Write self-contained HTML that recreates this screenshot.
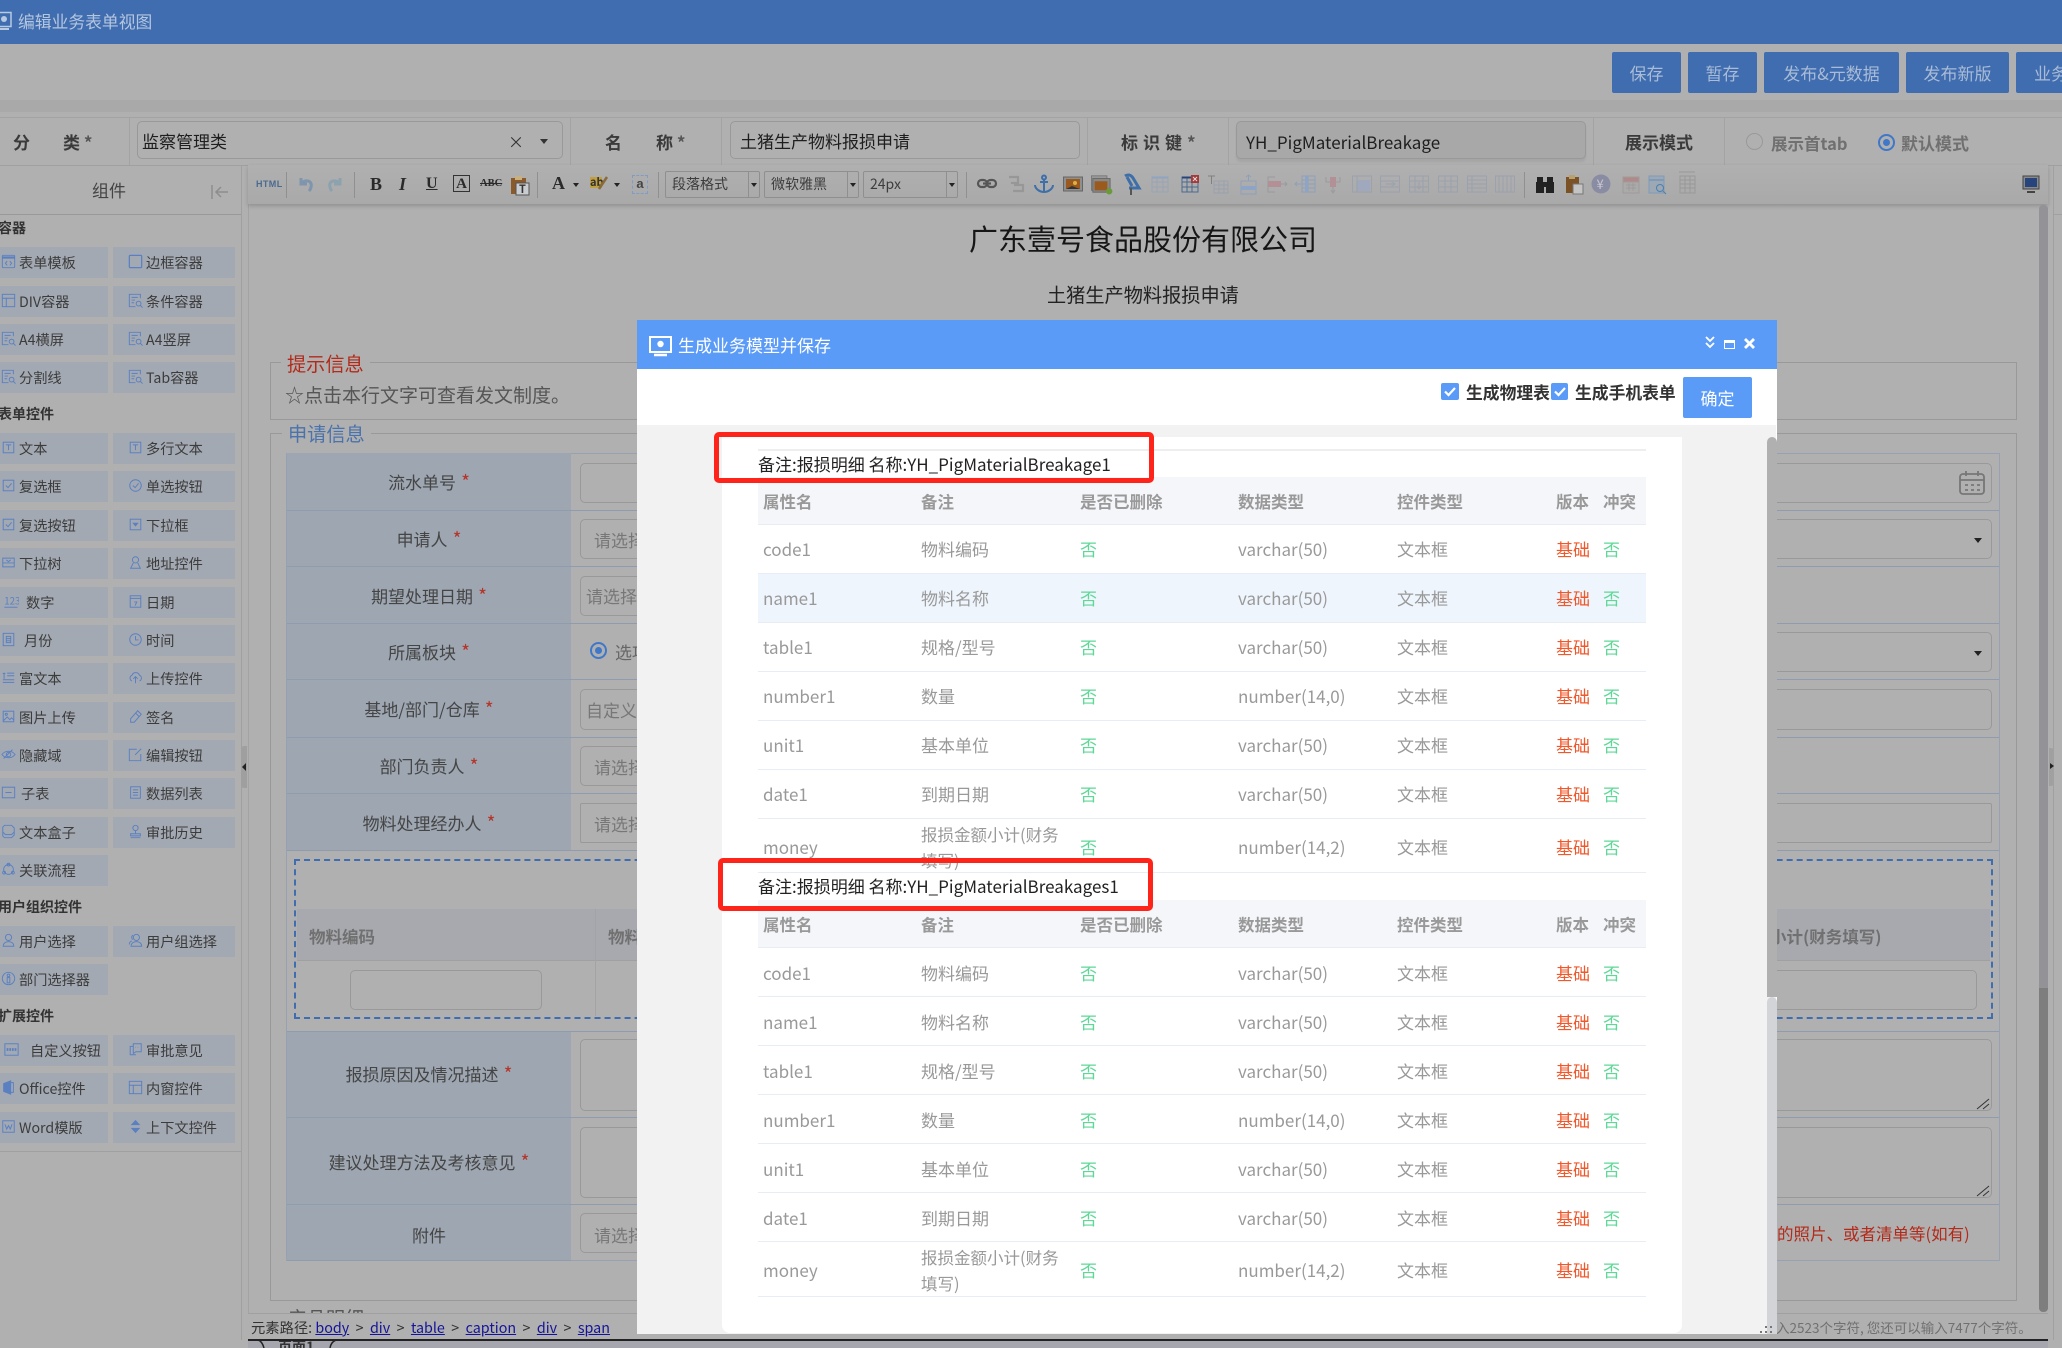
<!DOCTYPE html>
<html lang="zh"><head><meta charset="utf-8"><title>编辑业务表单视图</title>
<style>
*{box-sizing:border-box}
html{margin:0;padding:0;width:2062px;height:1348px;overflow:hidden}
body{margin:0;padding:0;position:relative;width:2062px;height:1348px;overflow:hidden;background:#b0b0b0;font-family:"Noto Sans CJK SC","Liberation Sans",sans-serif;font-size:17px;color:#333}
.a{position:absolute}
.t{position:absolute;white-space:nowrap;height:24px;line-height:24px}
.btn{position:absolute;top:52px;height:41px;background:#3f6db0;border-radius:2px;color:#a9bbd6;text-align:center;line-height:41px;font-size:17px;overflow:hidden;white-space:nowrap}
.inp{position:absolute;border:1px solid #999;border-radius:5px}
.b{position:absolute;height:31px;background:#a3a9b2;font-size:14.2px;color:#3c3c3c;line-height:32px;white-space:nowrap}
.b span{position:absolute;top:0}
.l{left:0;width:108px}.l span{left:19px}.l .ic{left:1px}
.r{left:113px;width:122px}.r span{left:33px}.r .ic{left:15px}
.ic{position:absolute;top:7px;width:15px;height:15px;fill:none;stroke:#5a80c2;stroke-width:1.1}
.sec{position:absolute;left:-2px;font-size:14px;font-weight:700;color:#333;white-space:nowrap;height:20px;line-height:20px}
.tb{position:absolute;top:174px;width:20px;height:20px;overflow:visible}
.sp{position:absolute;top:172px;width:1px;height:26px;background:#909090}
.sel{position:absolute;top:171px;height:27px;border:1px solid #8f8f8f;border-radius:2px;font-size:14px;line-height:25px;color:#3c3c3c;padding-left:6px;white-space:nowrap}
.sel i{position:absolute;right:10px;top:0;bottom:0;border-left:1px solid #8f8f8f}
.sel b{position:absolute;right:2px;top:11px;border:3.5px solid transparent;border-top:4px solid #222;border-bottom:0}
.lab{position:absolute;left:287px;width:284px;background:#9da6b1;border-bottom:1px solid #8f9cae;color:#454545;font-size:17px;text-align:center;white-space:nowrap}
.lab em{font-style:normal;color:#b5352a;margin-left:5px;font-size:19px;line-height:1}
.cell{position:absolute;left:571px;width:1428px;border-bottom:1px solid #8f9cae}
.row{position:absolute;left:758px;width:888px;border-bottom:1.5px solid #e8ecf4;font-size:17px;color:#999}
.row span{position:absolute;top:0;white-space:nowrap}
.c1{left:5px}.c2{left:163px}.c3{left:322px}.c4{left:480px}.c5{left:639px}.c6{left:798px}.c7{left:845px}
.g{color:#5fd897}.o{color:#f0582c}
.h{background:#f5f6fa;font-weight:700;font-size:16.5px;color:#999}
.cap{position:absolute;left:758px;white-space:nowrap;font-size:17px;color:#222;height:26px;line-height:26px}
.red{position:absolute;border:5px solid #ff2419;border-radius:5px}
</style></head><body>
<svg width="0" height="0" style="position:absolute">
<symbol id="tpl" viewBox="0 0 17 17"><rect x="1.500" y="1.500" width="14" height="14" rx="1"/><path d="M1.500 4h14" stroke-width="2.500"/><path d="M7 8l-2 2.500 2 2.500M10 8l2 2.500-2 2.500"/></symbol>
<symbol id="box" viewBox="0 0 17 17"><rect x="1.500" y="1.500" width="14" height="14" rx="1" stroke-width="1.400"/></symbol>
<symbol id="div" viewBox="0 0 17 17"><rect x="1.500" y="1.500" width="14" height="14"/><path d="M1.500 6h14M6 6v9.500"/></symbol>
<symbol id="fq" viewBox="0 0 17 17"><path d="M14 6V1.500H1.500v14h7M4 5h7M4 8h4M4 11h3"/><circle cx="12" cy="12" r="2.700"/><path d="M14 14l2.500 2.500"/></symbol>
<symbol id="txt" viewBox="0 0 17 17"><rect x="2.500" y="2.500" width="12" height="12"/><path d="M5.500 5.500h6M8.500 5.500v6"/></symbol>
<symbol id="chk" viewBox="0 0 17 17"><rect x="2.500" y="2.500" width="12" height="12"/><path d="M5.500 8.500l2.500 2.500 4-5"/></symbol>
<symbol id="rad" viewBox="0 0 17 17"><circle cx="8.500" cy="8.500" r="6.500"/><path d="M5.500 8.500l2.500 2.500 4-5"/></symbol>
<symbol id="sel" viewBox="0 0 17 17"><rect x="2.500" y="2.500" width="12" height="12"/><path d="M6 7h5l-2.500 3z" fill="#5a80c2"/></symbol>
<symbol id="tree" viewBox="0 0 17 17"><path d="M2 3.500h13v10H2zM2 9h13M6 5.500l2.500 2 2.500-2"/></symbol>
<symbol id="addr" viewBox="0 0 17 17"><circle cx="8.500" cy="5.500" r="3.500"/><path d="M6 9l-3 6h11l-3-6"/></symbol>
<symbol id="cal" viewBox="0 0 17 17"><rect x="2.500" y="2" width="12" height="13"/><path d="M2.500 5h12M7 9h3l-2 4"/></symbol>
<symbol id="mon" viewBox="0 0 17 17"><rect x="2.500" y="1.500" width="12" height="14"/><path d="M6 5h5v7H6zM6 7.500h5M6 10h5"/></symbol>
<symbol id="clk" viewBox="0 0 17 17"><circle cx="8.500" cy="8.500" r="6.500"/><path d="M8.500 4.500v4.500h3.500"/></symbol>
<symbol id="rich" viewBox="0 0 17 17"><path d="M2 4h3M3.500 3v7M7 3.500h8M7 6.500h8M2 11h13M2 14h13"/></symbol>
<symbol id="up" viewBox="0 0 17 17"><path d="M4.500 12.500a3.500 3.500 0 0 1 0-6.500 4.500 4.500 0 0 1 8.500 0 3.500 3.500 0 0 1 0 6.500M8.500 15V8M6 10l2.500-2.500L11 10"/></symbol>
<symbol id="img" viewBox="0 0 17 17"><rect x="2.500" y="2.500" width="12" height="12"/><circle cx="6" cy="6" r="1.200"/><path d="M3 13l4-4 3 3 2-2 2.500 2.500"/></symbol>
<symbol id="pen" viewBox="0 0 17 17"><path d="M11 2l4 4-8 9H3v-4zM9 5l3.500 3.500"/></symbol>
<symbol id="edit" viewBox="0 0 17 17"><path d="M10 2.500H1.500v13h13V8M8 9l7-7"/></symbol>
<symbol id="eye" viewBox="0 0 17 17"><path d="M1 8.500c4-5 11-5 15 0-4 5-11 5-15 0z"/><circle cx="8.500" cy="8.500" r="2.500"/><path d="M3 13L13 3"/></symbol>
<symbol id="sub" viewBox="0 0 17 17"><rect x="1.500" y="2.500" width="14" height="12"/><path d="M5 8.500h7"/></symbol>
<symbol id="list" viewBox="0 0 17 17"><rect x="3" y="2" width="11" height="13"/><path d="M5.500 5.500h6M5.500 8.500h6M5.500 11.500h6"/></symbol>
<symbol id="tbox" viewBox="0 0 17 17"><path d="M4 1.500h8l3 3v8l-3 3H4l-2-2v-10zM2 9l3 3h7l3-3"/></symbol>
<symbol id="hist" viewBox="0 0 17 17"><circle cx="8.500" cy="4.500" r="3"/><path d="M8.500 7.500v3M3 11h11v2.500H3zM3 15.500h11"/></symbol>
<symbol id="flow" viewBox="0 0 17 17"><circle cx="8.500" cy="8.500" r="5.500"/><circle cx="8.500" cy="3" r="1.600"/><circle cx="3.500" cy="12" r="1.600"/><circle cx="13.500" cy="12" r="1.600"/></symbol>
<symbol id="user" viewBox="0 0 17 17"><circle cx="8.500" cy="5" r="3.500"/><path d="M2.500 15c0-7 12-7 12 0z"/></symbol>
<symbol id="users" viewBox="0 0 17 17"><circle cx="9.500" cy="5" r="3.500"/><path d="M3.500 15c0-7 12-7 12 0zM5.500 2.500a3 3 0 0 0 0 5M1.500 13c0-2 1-3.500 3-4"/></symbol>
<symbol id="dept" viewBox="0 0 17 17"><circle cx="8.500" cy="8.500" r="7"/><circle cx="8.500" cy="5" r="1.500"/><path d="M7 7.500h3v6H7z"/></symbol>
<symbol id="bt" viewBox="0 0 17 17"><rect x="1" y="2" width="15" height="13"/><path d="M3 8.500h11" stroke-dasharray="2 1" stroke-width="3"/></symbol>
<symbol id="opin" viewBox="0 0 17 17"><path d="M6 2h9v9H9l-3 2zM6 5H2.500v9.500H9M8.500 6h.5M11 6h.5"/></symbol>
<symbol id="off" viewBox="0 0 17 17"><path d="M3 4l8-3v15l-8-3z" fill="#5a80c2"/><path d="M11 3h3v11h-3"/></symbol>
<symbol id="wd" viewBox="0 0 17 17"><rect x="2" y="2" width="13" height="13"/><path d="M4.500 6l2 5.500 2-4 2 4 2-5.500"/></symbol>
<symbol id="ud" viewBox="0 0 17 17"><path d="M3 7l5.500-6L14 7zM3 10l5.500 6L14 10z" fill="#5a80c2" stroke="none"/></symbol>
</svg>

<!-- top bar -->
<div class="a" style="left:0;top:0;width:2062px;height:44px;background:#3f6db0"></div>
<svg class="a" style="left:-3px;top:11px" width="16" height="20" viewBox="0 0 16 20" fill="none"><rect x="1" y="1.500" width="13" height="14" stroke="#b8c9e2" stroke-width="1.500"/><circle cx="7" cy="8" r="3" fill="#b8c9e2"/><path d="M3 18h9" stroke="#b8c9e2" stroke-width="2"/></svg>
<div class="t" style="left:18px;top:9px;color:#b4c5de;font-size:16.800px">编辑业务表单视图</div>

<div class="a" style="left:0;top:100px;width:2062px;height:12px;background:#a9a9a9"></div>
<div class="btn" style="left:1612px;width:69px">保存</div>
<div class="btn" style="left:1688px;width:69px">暂存</div>
<div class="btn" style="left:1764px;width:135px">发布&amp;元数据</div>
<div class="btn" style="left:1906px;width:103px">发布新版</div>
<div class="btn" style="left:2016px;width:60px;text-align:left;padding-left:18px">业务</div>

<!-- meta row -->
<div class="a" style="left:0;top:117px;width:2062px;height:49px;border-top:1px solid #a3a3a3;border-bottom:1px solid #a0a0a0"></div>
<div class="a" style="left:129px;top:117px;width:1px;height:48px;background:#a3a3a3"></div>
<div class="a" style="left:570px;top:117px;width:1px;height:48px;background:#a3a3a3"></div>
<div class="a" style="left:721px;top:117px;width:1px;height:48px;background:#a3a3a3"></div>
<div class="a" style="left:1087px;top:117px;width:1px;height:48px;background:#a3a3a3"></div>
<div class="a" style="left:1228px;top:117px;width:1px;height:48px;background:#a3a3a3"></div>
<div class="a" style="left:1593px;top:117px;width:1px;height:48px;background:#a3a3a3"></div>
<div class="a" style="left:1724px;top:117px;width:1px;height:48px;background:#a3a3a3"></div>
<div class="t" style="left:13px;top:130px;font-weight:700;color:#3a3a3a">分</div>
<div class="t" style="left:63px;top:130px;font-weight:700;color:#3a3a3a">类 <span style="color:#555">*</span></div>
<div class="inp" style="left:137px;top:121px;width:426px;height:38px"></div>
<div class="t" style="left:142px;top:129px;color:#1e1e1e">监察管理类</div>
<div class="t" style="left:508px;top:129px;color:#333;font-size:16px">×</div>
<div class="a" style="left:540px;top:139px;border:4px solid transparent;border-top:5px solid #333;border-bottom:0"></div>
<div class="t" style="left:605px;top:130px;font-weight:700;color:#3a3a3a">名</div>
<div class="t" style="left:656px;top:130px;font-weight:700;color:#3a3a3a">称 <span style="color:#555">*</span></div>
<div class="inp" style="left:730px;top:121px;width:350px;height:38px"></div>
<div class="t" style="left:740px;top:129px;color:#1e1e1e">土猪生产物料报损申请</div>
<div class="t" style="left:1121px;top:130px;font-weight:700;color:#3a3a3a;letter-spacing:5px">标识键<span style="color:#555">*</span></div>
<div class="inp" style="left:1236px;top:121px;width:350px;height:38px;background:#a8a8a8;box-shadow:0 3px 2px #a5a5a5"></div>
<div class="t" style="left:1246px;top:130px;color:#1e1e1e">YH_PigMaterialBreakage</div>
<div class="t" style="left:1625px;top:130px;font-weight:700;color:#3a3a3a">展示模式</div>
<div class="a" style="left:1746px;top:133px;width:17px;height:17px;border:1px solid #999;border-radius:50%"></div>
<div class="t" style="left:1771px;top:131px;font-weight:700;color:#707070;font-size:16.500px">展示首tab</div>
<div class="a" style="left:1878px;top:134px;width:17px;height:17px;border:2px solid #3f78c8;border-radius:50%"></div>
<div class="a" style="left:1883px;top:139px;width:7px;height:7px;background:#3f78c8;border-radius:50%"></div>
<div class="t" style="left:1901px;top:131px;font-weight:700;color:#707070">默认模式</div>

<!-- left panel -->
<div class="a" style="left:241px;top:165px;width:1px;height:1175px;background:#a0a0a0"></div>
<div class="a" style="left:0;top:214px;width:241px;height:1px;background:#999"></div>
<div class="t" style="left:92px;top:178px;color:#444;font-size:17px">组件</div>
<svg class="a" style="left:210px;top:183px" width="20" height="18" viewBox="0 0 20 18" fill="none" stroke="#8d8d8d" stroke-width="1.500"><path d="M2 2v14M18 9H6M11 4L6 9l5 5"/></svg>

<div class="sec" style="top:218px">容器</div>
<div class="b l" style="top:247px"><svg class="ic"><use href="#tpl"/></svg><span>表单模板</span></div>
<div class="b r" style="top:247px"><svg class="ic"><use href="#box"/></svg><span>边框容器</span></div>
<div class="b l" style="top:286px"><svg class="ic"><use href="#div"/></svg><span>DIV容器</span></div>
<div class="b r" style="top:286px"><svg class="ic"><use href="#fq"/></svg><span>条件容器</span></div>
<div class="b l" style="top:324px"><svg class="ic"><use href="#fq"/></svg><span>A4横屏</span></div>
<div class="b r" style="top:324px"><svg class="ic"><use href="#fq"/></svg><span>A4竖屏</span></div>
<div class="b l" style="top:362px"><svg class="ic"><use href="#fq"/></svg><span>分割线</span></div>
<div class="b r" style="top:362px"><svg class="ic"><use href="#fq"/></svg><span>Tab容器</span></div>

<div class="sec" style="top:404px">表单控件</div>
<div class="b l" style="top:433px"><svg class="ic"><use href="#txt"/></svg><span>文本</span></div>
<div class="b r" style="top:433px"><svg class="ic"><use href="#txt"/></svg><span>多行文本</span></div>
<div class="b l" style="top:471px"><svg class="ic"><use href="#chk"/></svg><span>复选框</span></div>
<div class="b r" style="top:471px"><svg class="ic"><use href="#rad"/></svg><span>单选按钮</span></div>
<div class="b l" style="top:510px"><svg class="ic"><use href="#chk"/></svg><span>复选按钮</span></div>
<div class="b r" style="top:510px"><svg class="ic"><use href="#sel"/></svg><span>下拉框</span></div>
<div class="b l" style="top:548px"><svg class="ic"><use href="#tree"/></svg><span>下拉树</span></div>
<div class="b r" style="top:548px"><svg class="ic"><use href="#addr"/></svg><span>地址控件</span></div>
<div class="b l" style="top:587px"><svg class="ic" viewBox="0 0 17 17" style="width:18px"><text x="2" y="12" font-size="11" fill="#5a80c2" stroke="none">123</text><path d="M2 15h15"/></svg><span style="left:26px">数字</span></div>
<div class="b r" style="top:587px"><svg class="ic"><use href="#cal"/></svg><span>日期</span></div>
<div class="b l" style="top:625px"><svg class="ic"><use href="#mon"/></svg><span style="left:24px">月份</span></div>
<div class="b r" style="top:625px"><svg class="ic"><use href="#clk"/></svg><span>时间</span></div>
<div class="b l" style="top:663px"><svg class="ic"><use href="#rich"/></svg><span>富文本</span></div>
<div class="b r" style="top:663px"><svg class="ic"><use href="#up"/></svg><span>上传控件</span></div>
<div class="b l" style="top:702px"><svg class="ic"><use href="#img"/></svg><span>图片上传</span></div>
<div class="b r" style="top:702px"><svg class="ic"><use href="#pen"/></svg><span>签名</span></div>
<div class="b l" style="top:740px"><svg class="ic"><use href="#eye"/></svg><span>隐藏域</span></div>
<div class="b r" style="top:740px"><svg class="ic"><use href="#edit"/></svg><span>编辑按钮</span></div>
<div class="b l" style="top:778px"><svg class="ic"><use href="#sub"/></svg><span style="left:21px">子表</span></div>
<div class="b r" style="top:778px"><svg class="ic"><use href="#list"/></svg><span>数据列表</span></div>
<div class="b l" style="top:817px"><svg class="ic"><use href="#tbox"/></svg><span>文本盒子</span></div>
<div class="b r" style="top:817px"><svg class="ic"><use href="#hist"/></svg><span>审批历史</span></div>
<div class="b l" style="top:855px"><svg class="ic"><use href="#flow"/></svg><span>关联流程</span></div>

<div class="sec" style="top:897px">用户组织控件</div>
<div class="b l" style="top:926px"><svg class="ic"><use href="#user"/></svg><span>用户选择</span></div>
<div class="b r" style="top:926px"><svg class="ic"><use href="#users"/></svg><span>用户组选择</span></div>
<div class="b l" style="top:964px"><svg class="ic"><use href="#dept"/></svg><span>部门选择器</span></div>

<div class="sec" style="top:1006px">扩展控件</div>
<div class="b l" style="top:1035px"><svg class="ic" style="left:2px;width:19px"><use href="#bt"/></svg><span style="left:30px">自定义按钮</span></div>
<div class="b r" style="top:1035px"><svg class="ic"><use href="#opin"/></svg><span>审批意见</span></div>
<div class="b l" style="top:1073px"><svg class="ic"><use href="#off"/></svg><span>Office控件</span></div>
<div class="b r" style="top:1073px"><svg class="ic"><use href="#div"/></svg><span>内窗控件</span></div>
<div class="b l" style="top:1112px"><svg class="ic"><use href="#wd"/></svg><span>Word模版</span></div>
<div class="b r" style="top:1112px"><svg class="ic"><use href="#ud"/></svg><span>上下文控件</span></div>
<div class="a" style="left:0;top:1151px;width:241px;height:1px;background:#a0a0a0"></div>

<div class="a" style="left:241px;top:746px;width:6px;height:42px;background:#9f9f9f;border-radius:3px 0 0 3px"></div>
<div class="a" style="left:242px;top:763px;border:4px solid transparent;border-right:4px solid #222;border-left:0"></div>

<!-- editor frame -->
<div class="a" style="left:248px;top:165px;width:1px;height:1175px;background:#a3a3a3"></div>
<div class="a" style="left:248px;top:165px;width:1800px;height:39px;background:linear-gradient(#b0b0b0,#a9a9a9);box-shadow:0 2px 4px rgba(0,0,0,.18)"></div>
<div class="a" style="left:2039px;top:205px;width:9px;height:783px;background:#929297;border-radius:4px 4px 0 0"></div>
<div class="a" style="left:2039px;top:988px;width:9px;height:324px;background:#7e7e7e;border-radius:0 0 4px 4px"></div>
<div class="a" style="left:2053px;top:165px;width:1px;height:1175px;background:#a0a0a0"></div>
<div class="a" style="left:2053px;top:214px;width:9px;height:1px;background:#a0a0a0"></div>
<div class="a" style="left:2049px;top:748px;width:5px;height:38px;background:#a0a0a0;border-radius:0 3px 3px 0"></div>
<div class="a" style="left:2050px;top:763px;border:3px solid transparent;border-left:4px solid #222;border-right:0"></div>

<!-- toolbar icons -->
<div class="t" style="left:256px;top:172px;font:700 9px/24px 'Liberation Sans',sans-serif;color:#4a6a90;letter-spacing:.4px">HTML</div>
<div class="sp" style="left:286px"></div>
<svg class="tb" style="left:296px" viewBox="0 0 20 20" fill="none" stroke="#7f95ad" stroke-width="3"><path d="M5 4v6h6M5 10c3-5 12-4 10 3-.3 2-1 3-2 4"/></svg>
<svg class="tb" style="left:325px" viewBox="0 0 20 20" fill="none" stroke="#8ca2ae" stroke-width="3"><path d="M15 4v6H9M15 10c-3-5-12-4-10 3 .3 2 1 3 2 4"/></svg>
<div class="sp" style="left:354px"></div>
<div class="t" style="left:370px;top:172px;font:700 18px/24px 'Liberation Serif',serif;color:#2a2a2a">B</div>
<div class="t" style="left:399px;top:172px;font:italic 700 18px/24px 'Liberation Serif',serif;color:#2a2a2a">I</div>
<div class="t" style="left:426px;top:172px;font:700 16px/24px 'Liberation Serif',serif;color:#2a2a2a;text-decoration:underline">U</div>
<div class="a" style="left:453px;top:175px;width:17px;height:17px;border:1px solid #333;font:700 15px/16px 'Liberation Serif',serif;text-align:center;color:#2a2a2a">A</div>
<div class="t" style="left:480px;top:172px;font:700 10.500px/24px 'Liberation Serif',serif;color:#2a2a2a;text-decoration:line-through">ABC</div>
<svg class="tb" style="left:510px;top:175px" viewBox="0 0 20 20"><rect x="1" y="3" width="15" height="16" fill="#8a5a2a"/><rect x="5" y="1" width="7" height="4" fill="#c8b080"/><rect x="6" y="8" width="13" height="12" fill="#c9ccd0" stroke="#555"/><text x="9" y="18" font-size="11" font-weight="700" fill="#333">T</text></svg>
<div class="sp" style="left:537px"></div>
<div class="t" style="left:552px;top:171px;font:700 18px/24px 'Liberation Serif',serif;color:#2a2a2a">A</div>
<div class="a" style="left:573px;top:183px;border:3.500px solid transparent;border-top:4px solid #222;border-bottom:0"></div>
<svg class="tb" style="left:590px" viewBox="0 0 20 20"><rect x="0" y="3" width="12" height="11" fill="#c0a040"/><text x="0" y="12" font-size="11" font-weight="700" fill="#333">ab</text><path d="M17 3L9 15" stroke="#8a6a3a" stroke-width="2.500"/></svg>
<div class="a" style="left:614px;top:183px;border:3.500px solid transparent;border-top:4px solid #222;border-bottom:0"></div>
<div class="a" style="left:632px;top:175px;width:16px;height:19px;border:1.500px dashed #7d9cc8;font:700 13px/16px 'Liberation Sans',sans-serif;text-align:center;color:#444">a</div>
<div class="sp" style="left:658px"></div>
<div class="sel" style="left:665px;width:95px">段落格式<i></i><b></b></div>
<div class="sel" style="left:764px;width:95px">微软雅黑<i></i><b></b></div>
<div class="sel" style="left:863px;width:95px">24px<i></i><b></b></div>
<div class="sp" style="left:966px"></div>
<svg class="tb" style="left:977px" viewBox="0 0 20 20" fill="none" stroke="#555" stroke-width="2.200"><rect x="1" y="6" width="9" height="7" rx="3.500"/><rect x="10" y="6" width="9" height="7" rx="3.500"/><path d="M6 9.500h8"/></svg>
<svg class="tb" style="left:1006px" viewBox="0 0 20 20" fill="none" stroke="#979797" stroke-width="2.200"><path d="M3 3h9v6H6v1M8 11h9v6H7"/></svg>
<svg class="tb" style="left:1034px" viewBox="0 0 20 20" fill="none" stroke="#3f6fa8" stroke-width="2"><circle cx="10" cy="3.500" r="2"/><path d="M10 5v13M6 8h8M1 11c0 4 5 7 9 7s9-3 9-7"/></svg>
<svg class="tb" style="left:1063px" viewBox="0 0 20 20"><rect x="0.500" y="3" width="19" height="14" fill="#8f8f8f" stroke="#666"/><rect x="3" y="5" width="14" height="10" fill="#9a5a1e"/><circle cx="12" cy="9" r="2" fill="#e0b040"/><path d="M3 15l6-3 8 3z" fill="#333"/></svg>
<svg class="tb" style="left:1091px" viewBox="0 0 22 20"><rect x="0.500" y="1" width="17" height="16" fill="#999" stroke="#777"/><rect x="2" y="4" width="19" height="15" fill="#888" stroke="#666"/><rect x="4" y="7" width="14" height="10" fill="#9a5a1e"/><circle cx="20" cy="18" r="3.500" fill="#6a9a3a"/></svg>
<svg class="tb" style="left:1122px" viewBox="0 0 20 20" fill="none" stroke="#3f6fa8" stroke-width="3"><path d="M3 2c3-2 6-1 8 2l6 10H7M5 3l5 9"/><path d="M9 14v7" stroke="#555" stroke-width="2"/></svg>
<svg class="tb" style="left:1150px" viewBox="0 0 20 20" fill="none" stroke="#98a4b4"><path d="M2 3h16v15H2zM2 8h16M2 13h16M7 3v15M13 3v15"/><path d="M2 3.500h16" stroke="#8ea4c0" stroke-width="2"/></svg>
<svg class="tb" style="left:1180px" viewBox="0 0 20 20" fill="none" stroke="#4b6a90"><path d="M2 3h16v15H2zM2 8h16M2 13h16M7 3v15M12 3v15"/><path d="M2 3.500h10" stroke="#27457c" stroke-width="2"/><rect x="11" y="1" width="8" height="8" fill="#a53a3a" stroke="none"/><path d="M13 3l4 4M17 3l-4 4" stroke="#ddd"/></svg>
<svg class="tb" style="left:1208px" viewBox="0 0 20 20" fill="none" stroke="#9aa2ad"><path d="M6 7h14v12H6zM6 11h14M6 15h14M11 7v12M16 7v12"/><path d="M0 2h7M3.500 2v8" stroke="#808080"/></svg>
<svg class="tb" style="left:1238px" viewBox="0 0 20 20" fill="none" stroke="#8ea0b8"><rect x="3" y="7" width="15" height="13"/><rect x="3" y="12" width="15" height="4" fill="#8ea4c6" stroke="none"/><path d="M10.500 1v6M8 3l2.500-2 2.500 2"/></svg>
<svg class="tb" style="left:1266px" viewBox="0 0 20 20" fill="none" stroke="#9a9aa0"><path d="M9 3H2v15h7"/><rect x="2" y="7" width="13" height="6" fill="#b39096" stroke="none"/><path d="M15 10h6M19 8l2 2-2 2" /></svg>
<svg class="tb" style="left:1295px" viewBox="0 0 20 20" fill="none" stroke="#8ea0b8"><path d="M7 2h13v16H7zM13 2v16M7 6h13M7 10h13M7 14h13M0 10h6M2 8l-2 2 2 2"/><rect x="10" y="2" width="3" height="16" fill="#8ea4c6" stroke="none"/></svg>
<svg class="tb" style="left:1323px" viewBox="0 0 20 20" fill="none" stroke="#9a9aa0"><path d="M3 3v5h14V3M10 3v16M8 16l2 3 2-3"/><rect x="7" y="3" width="6" height="10" fill="#b39096" stroke="none"/></svg>
<svg class="tb" style="left:1352px" viewBox="0 0 20 20" fill="none" stroke="#9aa2ad"><rect x="0.500" y="2" width="19" height="16"/><rect x="5" y="6" width="13" height="11" fill="#9fa8bc" stroke="none"/><path d="M5 2v16"/></svg>
<svg class="tb" style="left:1380px" viewBox="0 0 20 20" fill="none" stroke="#9aa2ad"><rect x="0.500" y="2" width="19" height="16"/><path d="M0 7h20M0 13h20M6 10h9M12 8l3 2-3 2" /></svg>
<svg class="tb" style="left:1409px" viewBox="0 0 20 20" fill="none" stroke="#9aa2ad"><rect x="0.500" y="2" width="19" height="16"/><path d="M0 7h20M0 13h20M6 2v16M14 2v16M10 8v7M8 12l2 3 2-3"/></svg>
<svg class="tb" style="left:1438px" viewBox="0 0 20 20" fill="none" stroke="#9aa2ad"><rect x="0.500" y="2" width="19" height="16"/><path d="M0 7h20M0 13h20M7 2v16M13 2v16"/></svg>
<svg class="tb" style="left:1467px" viewBox="0 0 20 20" fill="none" stroke="#9aa2ad"><rect x="0.500" y="2" width="19" height="16"/><path d="M0 6h20M0 10h20M0 14h20M5 2v16"/></svg>
<svg class="tb" style="left:1495px" viewBox="0 0 20 20" fill="none" stroke="#9aa2ad"><rect x="0.500" y="2" width="19" height="16"/><path d="M4 2v16M8 2v16M12 2v16M16 2v16"/></svg>
<div class="sp" style="left:1524px"></div>
<svg class="tb" style="left:1535px" viewBox="0 0 20 20" fill="#222"><rect x="2" y="3" width="6" height="5"/><rect x="12" y="3" width="6" height="5"/><rect x="1" y="8" width="8" height="11"/><rect x="11" y="8" width="8" height="11"/><rect x="8" y="8" width="4" height="5"/></svg>
<svg class="tb" style="left:1564px" viewBox="0 0 20 20"><rect x="2" y="3" width="13" height="16" fill="#7a5226"/><rect x="5" y="1" width="6" height="4" fill="#b8a070"/><rect x="9" y="10" width="10" height="10" fill="#c4c4c4" stroke="#777"/></svg>
<svg class="tb" style="left:1591px" viewBox="0 0 20 20"><circle cx="10" cy="10" r="9.500" fill="#8a8ca4"/><text x="5.500" y="15" font-size="13" fill="#c8c8d2">¥</text></svg>
<svg class="tb" style="left:1621px" viewBox="0 0 20 20" fill="none" stroke="#a09a9a"><rect x="2" y="3" width="16" height="16" fill="#aaa"/><rect x="2" y="3" width="16" height="5" fill="#b08a8a"/><path d="M5 11h10M5 14h10M8 9v8M12 9v8"/></svg>
<svg class="tb" style="left:1647px" viewBox="0 0 20 20" fill="none" stroke="#7f9ab8"><rect x="2" y="2" width="15" height="17" fill="#9ca8b4"/><path d="M2 6h15" stroke-width="2"/><circle cx="13" cy="14" r="3.500" stroke="#4c7fac"/><path d="M16 17l3 3" stroke="#4c7fac"/></svg>
<svg class="tb" style="left:1677px" viewBox="0 0 20 20" fill="none" stroke="#989898"><path d="M2 -2h16M3 2h15v17H3zM3 6h15M3 10h15M3 14h15M8 2v17M13 2v17"/></svg>
<svg class="tb" style="left:2021px" viewBox="0 0 20 20"><rect x="2" y="2" width="16" height="13" fill="#8a8a8a" stroke="#444"/><rect x="4" y="4" width="12" height="9" fill="#27457c"/><path d="M6 18h8" stroke="#444" stroke-width="2"/></svg>

<!-- editor content -->
<div class="t" style="left:969px;top:220px;height:36px;line-height:36px;font-size:29px;color:#161616">广东壹号食品股份有限公司</div>
<div class="t" style="left:1047px;top:282px;font-size:19.200px;color:#222">土猪生产物料报损申请</div>

<div class="a" style="left:270px;top:362px;width:1747px;height:58px;border:1px solid #999"></div>
<div class="t" style="left:281px;top:351px;background:#b0b0b0;padding:0 6px;font-size:19.200px;color:#b32a1a">提示信息</div>
<div class="t" style="left:285px;top:383px;font-size:19px;color:#555">☆点击本行文字可查看发文制度。</div>

<div class="a" style="left:270px;top:433px;width:1747px;height:868px;border:1px solid #999"></div>
<div class="t" style="left:282px;top:421px;background:#b0b0b0;padding:0 6px;font-size:19.200px;color:#4a72ab">申请信息</div>

<!-- form -->
<div class="a" style="left:286px;top:453px;width:1714px;height:808px;border:1px solid #96a2b2"></div>
<div class="lab" style="top:453px;height:58px;line-height:58px">流水单号<em>*</em></div>
<div class="lab" style="top:511px;height:56px;line-height:56px">申请人<em>*</em></div>
<div class="lab" style="top:567px;height:57px;line-height:57px">期望处理日期<em>*</em></div>
<div class="lab" style="top:624px;height:56px;line-height:56px">所属板块<em>*</em></div>
<div class="lab" style="top:680px;height:58px;line-height:58px">基地/部门/仓库<em>*</em></div>
<div class="lab" style="top:738px;height:56px;line-height:56px">部门负责人<em>*</em></div>
<div class="lab" style="top:794px;height:57px;line-height:57px">物料处理经办人<em>*</em></div>
<div class="lab" style="top:1031px;height:87px;line-height:85px">报损原因及情况描述<em>*</em></div>
<div class="lab" style="top:1118px;height:87px;line-height:87px">建议处理方法及考核意见<em>*</em></div>
<div class="lab" style="top:1205px;height:56px;line-height:60px">附件</div>
<div class="cell" style="top:453px;height:58px"></div>
<div class="cell" style="top:511px;height:56px"></div>
<div class="cell" style="top:567px;height:57px"></div>
<div class="cell" style="top:624px;height:56px"></div>
<div class="cell" style="top:680px;height:58px"></div>
<div class="cell" style="top:738px;height:56px"></div>
<div class="cell" style="top:794px;height:57px"></div>
<div class="a" style="left:287px;top:1031px;width:1712px;height:1px;background:#8f9cae"></div>
<div class="cell" style="top:1031px;height:87px"></div>
<div class="cell" style="top:1118px;height:87px"></div>
<div class="inp" style="left:580px;top:463px;width:1412px;height:40px"></div>
<div class="inp" style="left:580px;top:519px;width:1412px;height:40px"></div>
<div class="inp" style="left:580px;top:576px;width:200px;height:40px"></div>
<div class="inp" style="left:1700px;top:632px;width:292px;height:40px"></div>
<div class="inp" style="left:580px;top:689px;width:1412px;height:41px"></div>
<div class="inp" style="left:580px;top:746px;width:200px;height:40px"></div>
<div class="inp" style="left:580px;top:803px;width:1412px;height:40px;border-radius:2px"></div>
<div class="inp" style="left:580px;top:1039px;width:1412px;height:72px"></div>
<div class="inp" style="left:580px;top:1127px;width:1412px;height:71px"></div>
<div class="inp" style="left:580px;top:1213px;width:200px;height:40px"></div>
<div class="t" style="left:594px;top:528px;color:#777">请选择</div>
<div class="t" style="left:586px;top:584px;color:#777">请选择</div>
<div class="a" style="left:590px;top:642px;width:17px;height:17px;border:2px solid #3f78c8;border-radius:50%"></div>
<div class="a" style="left:595px;top:647px;width:7px;height:7px;background:#3f78c8;border-radius:50%"></div>
<div class="t" style="left:615px;top:640px;color:#666">选项</div>
<div class="t" style="left:586px;top:698px;color:#777">自定义</div>
<div class="t" style="left:594px;top:755px;color:#777">请选择</div>
<div class="t" style="left:594px;top:812px;color:#777">请选择</div>
<div class="t" style="left:594px;top:1223px;color:#777">请选择</div>
<svg class="a" style="left:1958px;top:470px" width="28" height="26" viewBox="0 0 28 26" fill="none" stroke="#777" stroke-width="1.800"><rect x="2" y="4" width="24" height="20" rx="3"/><path d="M2 10h24M8 1v5M20 1v5M7 15h3M13 15h3M19 15h3M7 20h3M13 20h3M19 20h3"/></svg>
<div class="a" style="left:1974px;top:538px;border:4px solid transparent;border-top:5px solid #222;border-bottom:0"></div>
<div class="a" style="left:1974px;top:651px;border:4px solid transparent;border-top:5px solid #222;border-bottom:0"></div>
<svg class="a" style="left:1976px;top:1098px" width="14" height="12" stroke="#333"><path d="M1 11L13 1M7 11l6-5"/></svg>
<svg class="a" style="left:1976px;top:1185px" width="14" height="12" stroke="#333"><path d="M1 11L13 1M7 11l6-5"/></svg>

<!-- sub table -->
<div class="a" style="left:294px;top:859px;width:1699px;height:160px;border:2.500px dashed #3f6db0"></div>
<div class="a" style="left:297px;top:909px;width:1693px;height:51px;background:#a7a9ae"></div>
<div class="a" style="left:297px;top:960px;width:1693px;height:1px;background:#a0a0a0"></div>
<div class="a" style="left:595px;top:909px;width:1px;height:107px;background:#a3a3a3"></div>
<div class="t" style="left:309px;top:924px;font-weight:700;color:#707070;font-size:16.500px">物料编码</div>
<div class="t" style="left:608px;top:924px;font-weight:700;color:#707070;font-size:16.500px">物料名称</div>
<div class="t" style="left:1770px;top:924px;font-weight:700;color:#707070;font-size:16.500px">小计(财务填写)</div>
<div class="inp" style="left:350px;top:970px;width:192px;height:40px"></div>
<div class="inp" style="left:1700px;top:970px;width:277px;height:40px"></div>
<div class="t" style="left:1777px;top:1221px;color:#b32a1a;font-size:16.500px">的照片、或者清单等(如有)</div>

<div class="t" style="left:288px;top:1306px;height:24px;line-height:24px;font-size:19px;color:#555">产品明细</div>

<!-- status bar -->
<div class="a" style="left:248px;top:1313px;width:1800px;height:27px;background:#b0b0b0;border-top:1px solid #a0a0a0"></div>
<div class="t" style="left:251px;top:1316px;font-size:14.300px;color:#333">元素路径: <u style="color:#14149a">body</u> &nbsp;&gt;&nbsp; <u style="color:#14149a">div</u> &nbsp;&gt;&nbsp; <u style="color:#14149a">table</u> &nbsp;&gt;&nbsp; <u style="color:#14149a">caption</u> &nbsp;&gt;&nbsp; <u style="color:#14149a">div</u> &nbsp;&gt;&nbsp; <u style="color:#14149a">span</u></div>
<div class="t" style="left:1776px;top:1315px;font-size:13.500px;color:#707070">入2523个字符, 您还可以输入7477个字符。</div>
<div class="a" style="left:248px;top:1339px;width:1800px;height:2px;background:#222"></div>
<div class="a" style="left:248px;top:1341px;width:1800px;height:7px;background:#a6a6ae"></div>
<svg class="a" style="left:248px;top:1339px" width="90" height="9" fill="none" stroke="#222" stroke-width="1.500"><path d="M0 1h10q4 1 6 8M82 9q1-6 6-8"/></svg>
<div class="t" style="left:278px;top:1335px;font-size:14px;font-weight:700;color:#333;clip-path:inset(6px 0 0 0);z-index:1">页面1</div>

<!-- modal -->
<div class="a" style="left:637px;top:320px;width:1140px;height:1014px;background:#f2f2f2;border-right:1px solid #fff"></div>
<div class="a" style="left:637px;top:320px;width:1140px;height:49px;background:#5b9bf8"></div>
<svg class="a" style="left:649px;top:335px" width="24" height="22" viewBox="0 0 24 22" fill="none"><rect x="1" y="2" width="21" height="15" stroke="#fff" stroke-width="2"/><circle cx="11.500" cy="9" r="3.200" fill="#fff"/><path d="M5 20h13" stroke="#fff" stroke-width="2.500"/></svg>
<div class="t" style="left:678px;top:333px;color:#fff;font-size:17px">生成业务模型并保存</div>
<svg class="a" style="left:1704px;top:336px" width="12" height="13" viewBox="0 0 12 13" fill="none" stroke="#fff" stroke-width="1.800"><path d="M2 1l4 4 4-4M2 7l4 4 4-4"/></svg>
<div class="a" style="left:1724px;top:340px;width:11px;height:9px;border:1.500px solid #fff;border-top-width:3px"></div>
<svg class="a" style="left:1744px;top:338px" width="11" height="11" stroke="#fff" stroke-width="2.800"><path d="M1 1l9 9M10 1l-9 9"/></svg>
<div class="a" style="left:637px;top:369px;width:1140px;height:56px;background:#fff"></div>
<div class="a" style="left:1441px;top:383px;width:18px;height:17px;background:#5b9bf8;border-radius:2px"></div>
<svg class="a" style="left:1443px;top:385px" width="14" height="13" fill="none" stroke="#fff" stroke-width="2.200"><path d="M2 6.500l3.500 3.500 6.500-7"/></svg>
<div class="t" style="left:1466px;top:380px;font-weight:700;font-size:16.800px;color:#333">生成物理表</div>
<div class="a" style="left:1551px;top:383px;width:17px;height:17px;background:#5b9bf8;border-radius:2px"></div>
<svg class="a" style="left:1553px;top:385px" width="14" height="13" fill="none" stroke="#fff" stroke-width="2.200"><path d="M2 6.500l3.500 3.500 6.500-7"/></svg>
<div class="t" style="left:1575px;top:380px;font-weight:700;font-size:16.800px;color:#333">生成手机表单</div>
<div class="a" style="left:1683px;top:377px;width:69px;height:41px;background:#5b9bf8;border-radius:2px;color:#fff;text-align:center;line-height:41px">确定</div>
<div class="a" style="left:722px;top:437px;width:960px;height:896px;background:#fff;border-radius:0 0 8px 8px"></div>
<div class="a" style="left:1767px;top:437px;width:10px;height:560px;background:#b0b0b0;border-radius:5px 5px 0 0"></div>
<div class="a" style="left:1767px;top:997px;width:10px;height:337px;background:#d3d4d8;border-radius:5px 5px 0 0"></div>
<svg class="a" style="left:1760px;top:1326px" width="16" height="8" fill="#777"><rect x="0" y="5" width="2" height="2"/><rect x="5" y="5" width="2" height="2"/><rect x="10" y="5" width="2" height="2"/><rect x="5" y="0" width="2" height="2"/><rect x="10" y="0" width="2" height="2"/></svg>

<div class="a" style="left:758px;top:449px;width:888px;height:1.500px;background:#eee"></div>
<div class="cap" style="top:451px">备注:报损明细 名称:YH_PigMaterialBreakage1</div>

<div class="row h" style="top:477px;height:48px;line-height:48px"><span class="c1">属性名</span><span class="c2">备注</span><span class="c3">是否已删除</span><span class="c4">数据类型</span><span class="c5">控件类型</span><span class="c6">版本</span><span class="c7">冲突</span></div>
<div class="row" style="top:525px;height:49px;line-height:48px"><span class="c1">code1</span><span class="c2">物料编码</span><span class="c3 g">否</span><span class="c4">varchar(50)</span><span class="c5">文本框</span><span class="c6 o">基础</span><span class="c7 g">否</span></div>
<div class="row" style="top:574px;height:49px;line-height:48px;background:#eff5fd"><span class="c1">name1</span><span class="c2">物料名称</span><span class="c3 g">否</span><span class="c4">varchar(50)</span><span class="c5">文本框</span><span class="c6 o">基础</span><span class="c7 g">否</span></div>
<div class="row" style="top:623px;height:49px;line-height:48px"><span class="c1">table1</span><span class="c2">规格/型号</span><span class="c3 g">否</span><span class="c4">varchar(50)</span><span class="c5">文本框</span><span class="c6 o">基础</span><span class="c7 g">否</span></div>
<div class="row" style="top:672px;height:49px;line-height:48px"><span class="c1">number1</span><span class="c2">数量</span><span class="c3 g">否</span><span class="c4">number(14,0)</span><span class="c5">文本框</span><span class="c6 o">基础</span><span class="c7 g">否</span></div>
<div class="row" style="top:721px;height:49px;line-height:48px"><span class="c1">unit1</span><span class="c2">基本单位</span><span class="c3 g">否</span><span class="c4">varchar(50)</span><span class="c5">文本框</span><span class="c6 o">基础</span><span class="c7 g">否</span></div>
<div class="row" style="top:770px;height:49px;line-height:48px"><span class="c1">date1</span><span class="c2">到期日期</span><span class="c3 g">否</span><span class="c4">varchar(50)</span><span class="c5">文本框</span><span class="c6 o">基础</span><span class="c7 g">否</span></div>
<div class="row" style="top:819px;height:54px;line-height:56px"><span class="c1">money</span><span class="c2" style="line-height:26px;top:2px;white-space:normal;width:150px;font-size:16.500px">报损金额小计(财务填写)</span><span class="c3 g">否</span><span class="c4">number(14,2)</span><span class="c5">文本框</span><span class="c6 o">基础</span><span class="c7 g">否</span></div>

<div class="a" style="left:758px;top:873px;width:888px;height:27px;background:#fff"></div>
<div class="cap" style="top:873px">备注:报损明细 名称:YH_PigMaterialBreakages1</div>

<div class="row h" style="top:900px;height:48px;line-height:48px"><span class="c1">属性名</span><span class="c2">备注</span><span class="c3">是否已删除</span><span class="c4">数据类型</span><span class="c5">控件类型</span><span class="c6">版本</span><span class="c7">冲突</span></div>
<div class="row" style="top:948px;height:49px;line-height:50px"><span class="c1">code1</span><span class="c2">物料编码</span><span class="c3 g">否</span><span class="c4">varchar(50)</span><span class="c5">文本框</span><span class="c6 o">基础</span><span class="c7 g">否</span></div>
<div class="row" style="top:997px;height:49px;line-height:50px"><span class="c1">name1</span><span class="c2">物料名称</span><span class="c3 g">否</span><span class="c4">varchar(50)</span><span class="c5">文本框</span><span class="c6 o">基础</span><span class="c7 g">否</span></div>
<div class="row" style="top:1046px;height:49px;line-height:50px"><span class="c1">table1</span><span class="c2">规格/型号</span><span class="c3 g">否</span><span class="c4">varchar(50)</span><span class="c5">文本框</span><span class="c6 o">基础</span><span class="c7 g">否</span></div>
<div class="row" style="top:1095px;height:49px;line-height:50px"><span class="c1">number1</span><span class="c2">数量</span><span class="c3 g">否</span><span class="c4">number(14,0)</span><span class="c5">文本框</span><span class="c6 o">基础</span><span class="c7 g">否</span></div>
<div class="row" style="top:1144px;height:49px;line-height:50px"><span class="c1">unit1</span><span class="c2">基本单位</span><span class="c3 g">否</span><span class="c4">varchar(50)</span><span class="c5">文本框</span><span class="c6 o">基础</span><span class="c7 g">否</span></div>
<div class="row" style="top:1193px;height:49px;line-height:50px"><span class="c1">date1</span><span class="c2">到期日期</span><span class="c3 g">否</span><span class="c4">varchar(50)</span><span class="c5">文本框</span><span class="c6 o">基础</span><span class="c7 g">否</span></div>
<div class="row" style="top:1242px;height:55px;line-height:56px"><span class="c1">money</span><span class="c2" style="line-height:26px;top:2px;white-space:normal;width:150px;font-size:16.500px">报损金额小计(财务填写)</span><span class="c3 g">否</span><span class="c4">number(14,2)</span><span class="c5">文本框</span><span class="c6 o">基础</span><span class="c7 g">否</span></div>

<div class="red" style="left:714px;top:432px;width:440px;height:51px"></div>
<div class="red" style="left:718px;top:858px;width:435px;height:53px"></div>
</body></html>
